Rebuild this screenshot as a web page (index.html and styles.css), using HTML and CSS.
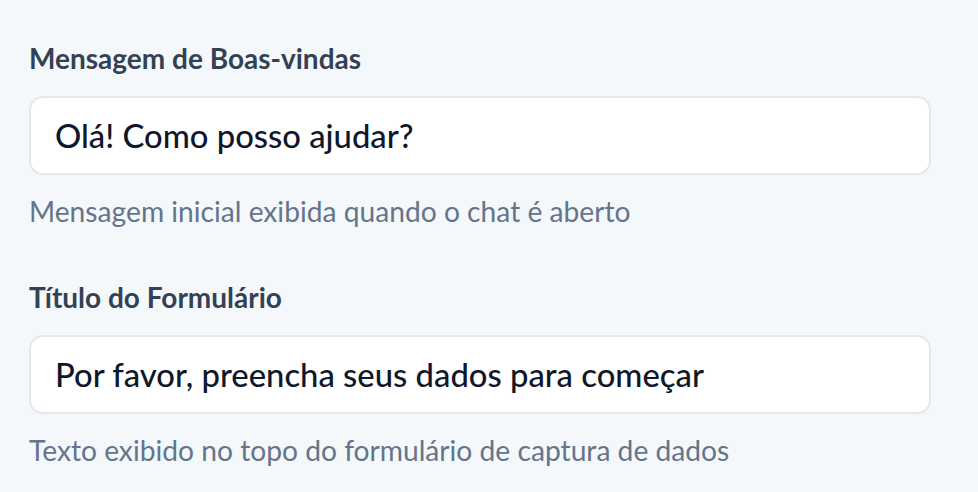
FILE: index.html
```html
<!DOCTYPE html>
<html lang="pt-BR">
<head>
  <meta charset="UTF-8">
  <title>Configurações do Chat</title>
  <link rel="stylesheet" href="styles.css">
</head>
<body>
  <div class="settings">
    <div class="field">
      <label class="field-label" for="welcome">Mensagem de Boas-vindas</label>
      <input class="field-input" type="text" id="welcome" value="Olá! Como posso ajudar?">
      <p class="field-help">Mensagem inicial exibida quando o chat é aberto</p>
    </div>

    <div class="field">
      <label class="field-label" for="formTitle">Título do Formulário</label>
      <input class="field-input" type="text" id="formTitle" value="Por favor, preencha seus dados para começar">
      <p class="field-help">Texto exibido no topo do formulário de captura de dados</p>
    </div>
  </div>
</body>
</html>
```

FILE: styles.css
```css
body {
  margin: 0;
  background: #f5f8fb;
  font-family: "Lato", "Noto Sans", sans-serif;
}
.settings {
  padding: 38px 47px 0 29px;
  display: flex;
  flex-direction: column;
  gap: 48px;
}
.field {
  display: flex;
  flex-direction: column;
}
.field-label {
  font-size: 28px;
  line-height: 40px;
  font-weight: 700;
  color: #334155;
  margin-bottom: 18px;
}
.field-input {
  box-sizing: border-box;
  height: 79px;
  width: 100%;
  padding: 0 24px;
  border: 2px solid #e2e8f0;
  border-radius: 14px;
  background: #fff;
  font-family: inherit;
  font-size: 32.8px;
  font-weight: 500;
  color: #0f172a;
  outline: none;
}
.field-help {
  margin: 18px 0 0;
  font-size: 28.2px;
  line-height: 36px;
  color: #64748b;
}
```
